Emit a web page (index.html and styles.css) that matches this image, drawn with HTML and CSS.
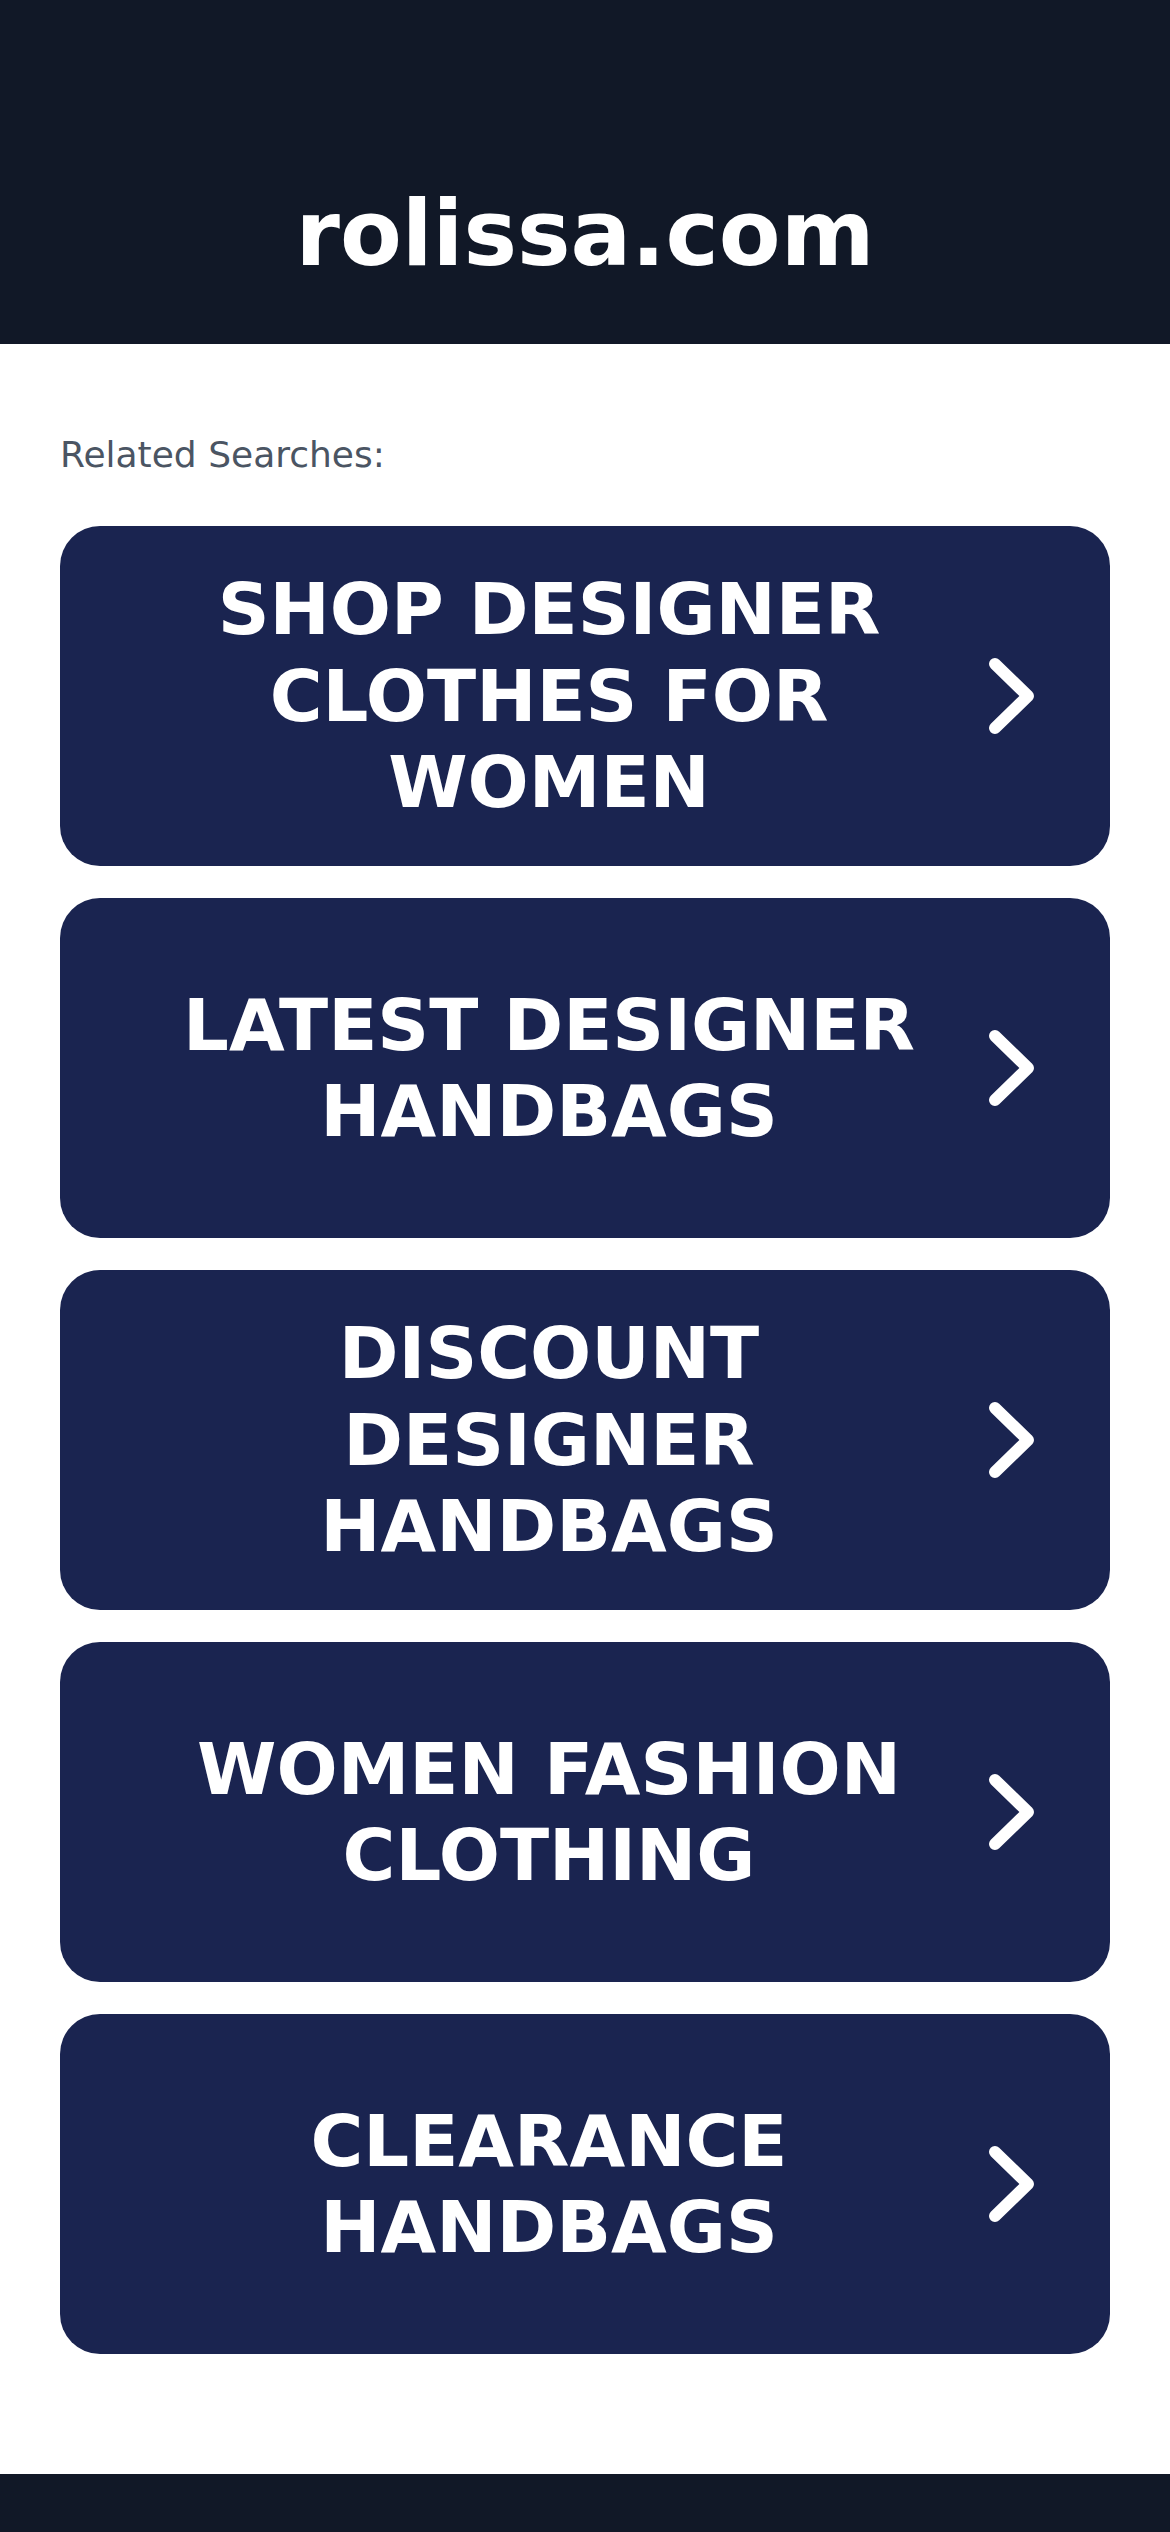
FILE: index.html
```html
<!DOCTYPE html>
<html lang="en">
<head>
    <meta charset="UTF-8">
    <meta name="viewport" content="width=device-width, initial-scale=1.0">
    <title>rolissa.com</title>
    <link rel="stylesheet" href="styles.css">
</head>
<body>

    <header class="header">
        <h1 class="site-name">rolissa.com</h1>
    </header>

    <main class="content">
        <p class="related-title">Related Searches:</p>

        <div class="search-list">
            <a class="search-btn" href="#">
                <span class="search-text">SHOP DESIGNER CLOTHES FOR WOMEN</span>
                <svg class="chevron" viewBox="0 0 56 84"><path d="M11 10 L44 42 L11 74"/></svg>
            </a>
            <a class="search-btn" href="#">
                <span class="search-text">LATEST DESIGNER HANDBAGS</span>
                <svg class="chevron" viewBox="0 0 56 84"><path d="M11 10 L44 42 L11 74"/></svg>
            </a>
            <a class="search-btn" href="#">
                <span class="search-text">DISCOUNT DESIGNER HANDBAGS</span>
                <svg class="chevron" viewBox="0 0 56 84"><path d="M11 10 L44 42 L11 74"/></svg>
            </a>
            <a class="search-btn" href="#">
                <span class="search-text">WOMEN FASHION CLOTHING</span>
                <svg class="chevron" viewBox="0 0 56 84"><path d="M11 10 L44 42 L11 74"/></svg>
            </a>
            <a class="search-btn" href="#">
                <span class="search-text">CLEARANCE HANDBAGS</span>
                <svg class="chevron" viewBox="0 0 56 84"><path d="M11 10 L44 42 L11 74"/></svg>
            </a>
        </div>
    </main>

    <footer class="footer"></footer>

</body>
</html>
```

FILE: styles.css
```css
body {
    margin: 0;
    background-color: #ffffff;
    font-family: "DejaVu Sans", Verdana, sans-serif;
}

.header {
    background-color: #111827;
    height: 344px;
    display: flex;
    align-items: center;
    justify-content: center;
}

.site-name {
    margin: 0;
    padding-top: 124px;
    color: #ffffff;
    font-size: 90px;
    font-weight: bold;
    line-height: 1.2;
}

.content {
    padding: 84px 60px 120px;
}

.related-title {
    margin: 0 0 44px;
    color: #4b5563;
    font-size: 36px;
    line-height: 54px;
}

.search-list {
    display: flex;
    flex-direction: column;
    gap: 32px;
}

.search-btn {
    display: flex;
    align-items: center;
    gap: 26px;
    height: 340px;
    padding: 0 70px 0 80px;
    background-color: #1a2450;
    border-radius: 40px;
    text-decoration: none;
    box-sizing: border-box;
}

.search-text {
    flex: 1;
    color: #ffffff;
    font-size: 72px;
    font-weight: bold;
    line-height: 1.2;
    text-align: center;
}

.chevron {
    width: 56px;
    height: 84px;
    flex-shrink: 0;
}

.chevron path {
    fill: none;
    stroke: #ffffff;
    stroke-width: 12;
    stroke-linecap: round;
    stroke-linejoin: round;
}

.footer {
    background-color: #111827;
    height: 58px;
}
```
